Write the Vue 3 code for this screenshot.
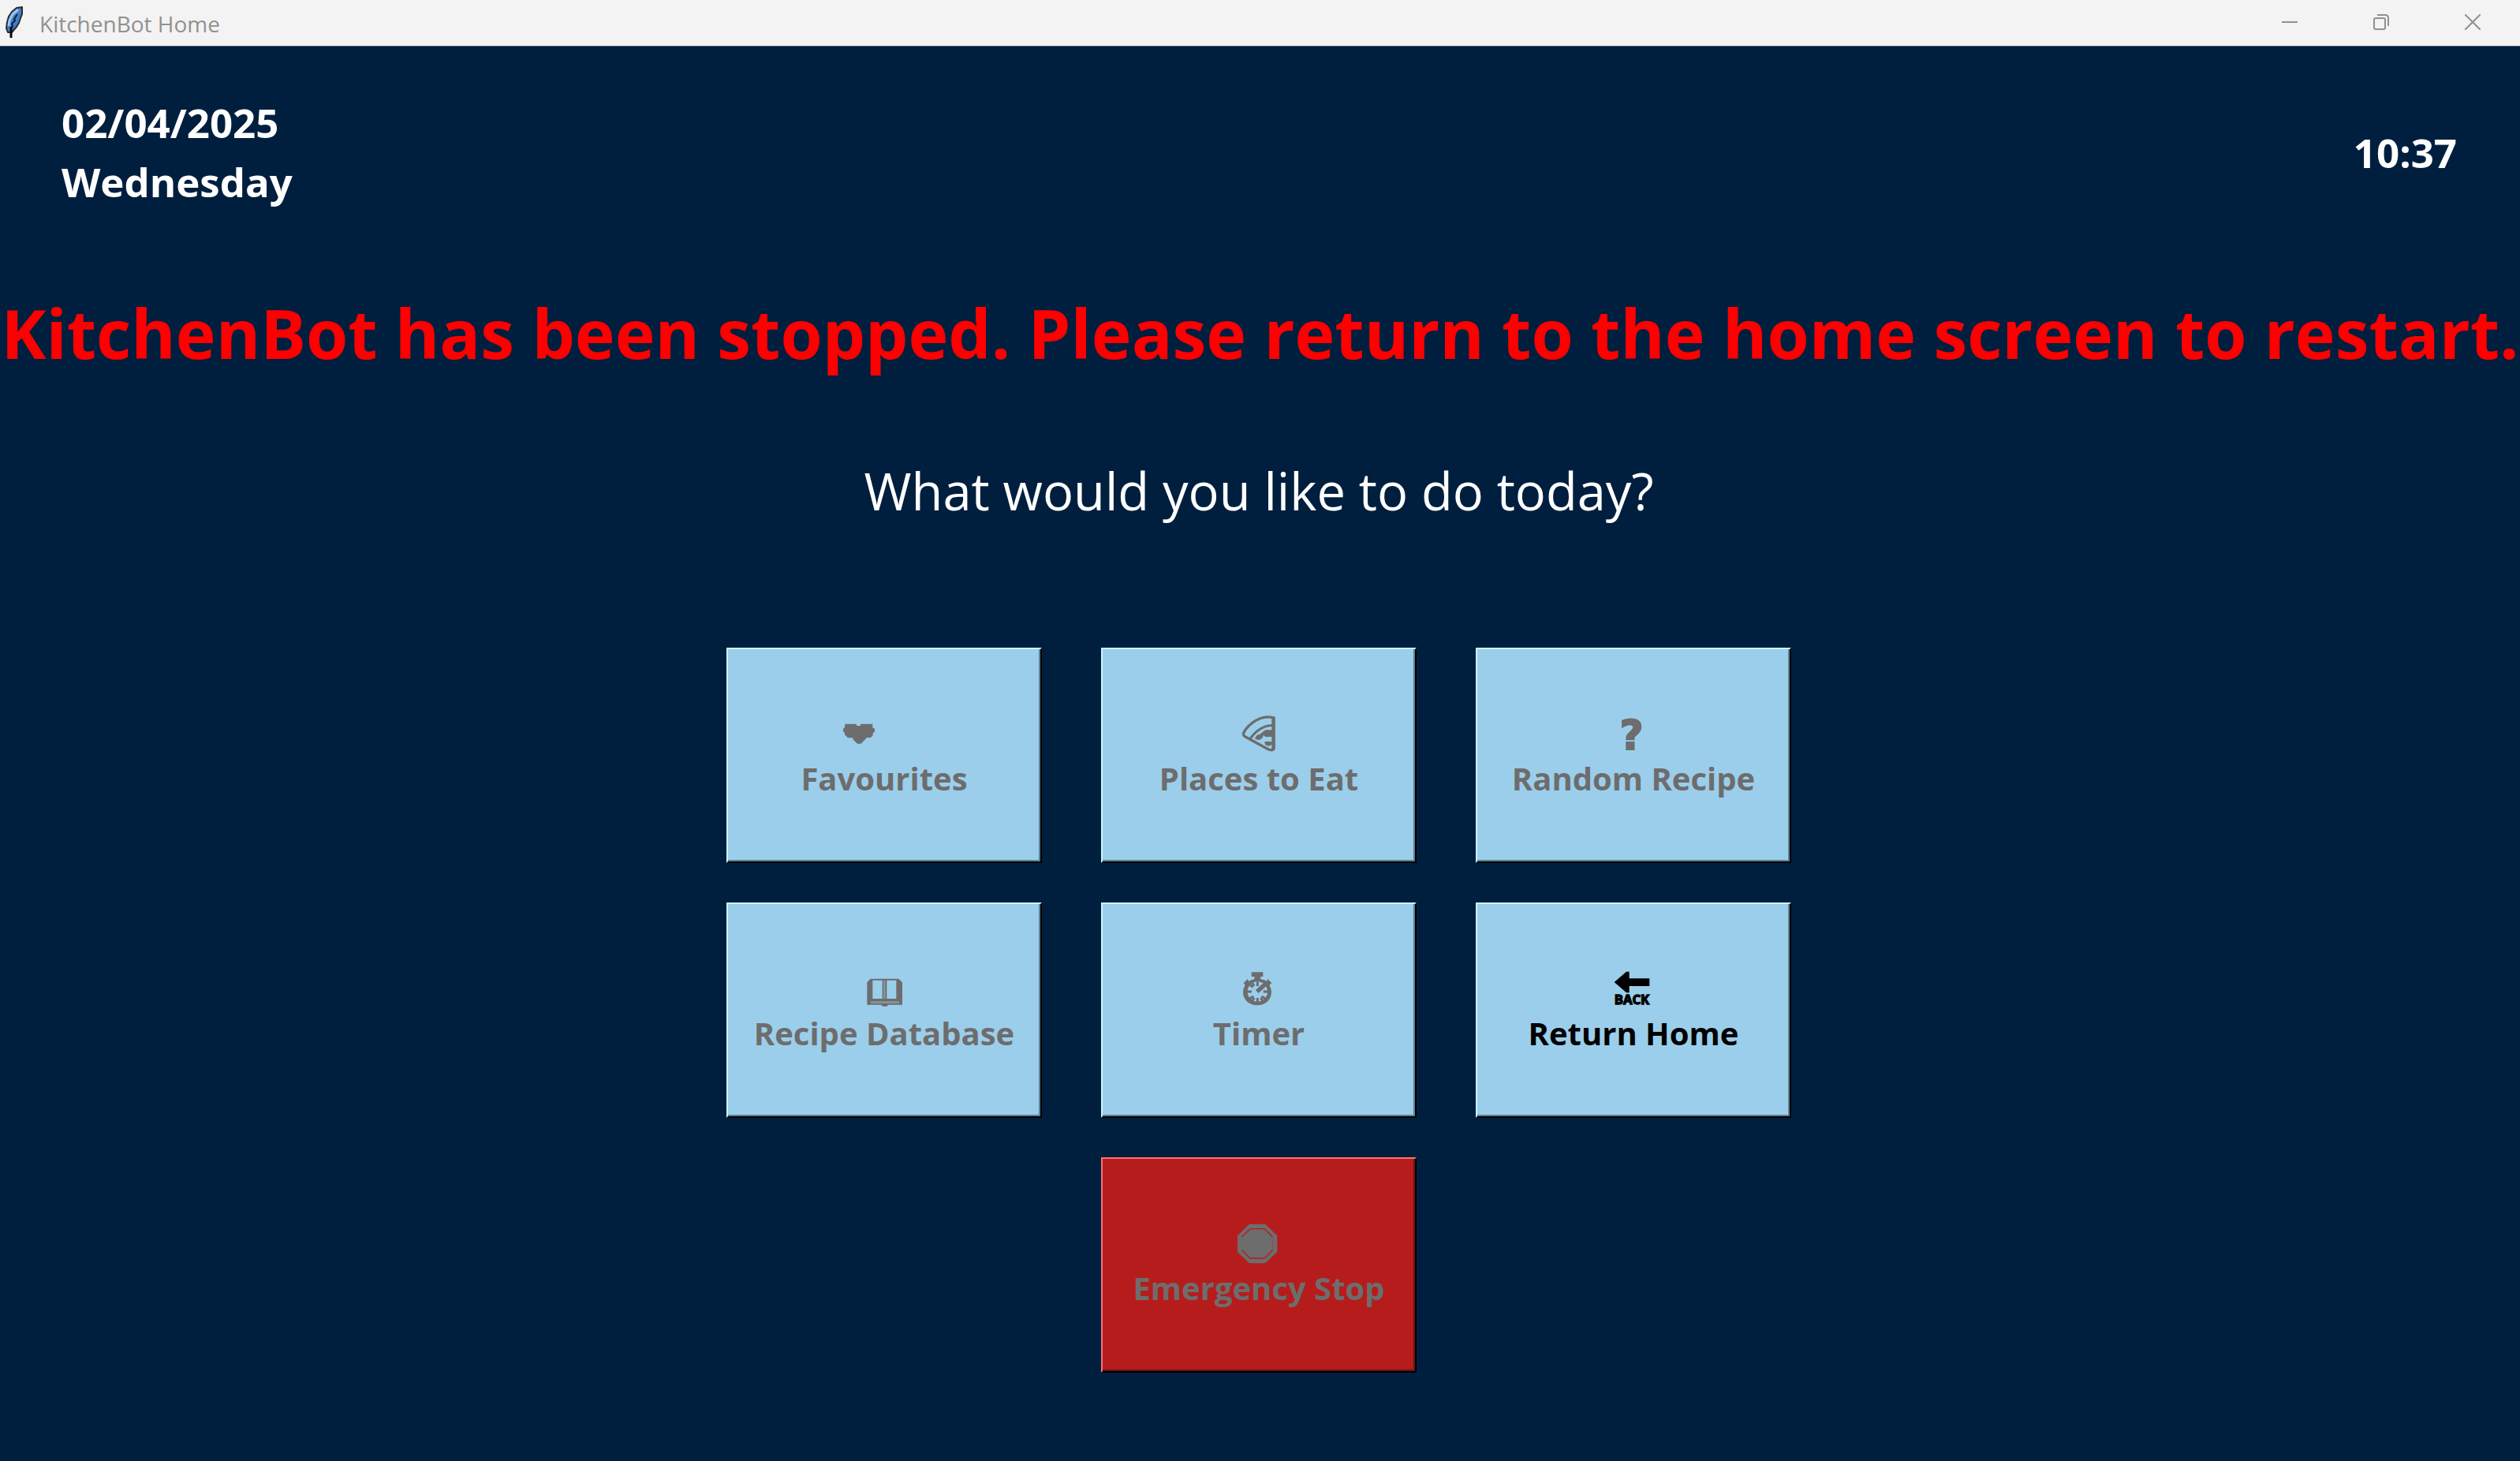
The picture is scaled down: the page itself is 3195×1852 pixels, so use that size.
<script setup>
const actions = [
  { id: 'favourites', label: 'Favourites', disabled: true },
  { id: 'places', label: 'Places to Eat', disabled: true },
  { id: 'random', label: 'Random Recipe', disabled: true },
  { id: 'database', label: 'Recipe Database', disabled: true },
  { id: 'timer', label: 'Timer', disabled: true },
  { id: 'home', label: 'Return Home', disabled: false },
  { id: 'stop', label: 'Emergency Stop', disabled: true }
]
</script>

<template>
  <div class="window">
    <header class="titlebar">
      <svg class="feather" viewBox="0 0 28 44" width="28" height="44" aria-hidden="true">
        <path d="M24 3L17 4 11 9 7 15 5 22 4 30 6 35 11 35 17 28 20 23 22 17 24 12z" fill="#3f7fd0" stroke="#2b2b2b" stroke-width="2" stroke-linejoin="round" />
        <path d="M19 6L12 12 8 20 7 27" fill="none" stroke="#9cc8ee" stroke-width="3" />
        <path d="M18 12L14 18 15 20 11 24 12 27 10 31" fill="none" stroke="#16202c" stroke-width="2" />
        <path d="M10 28V42" fill="none" stroke="#0b0b0b" stroke-width="3" />
      </svg>
      <span class="title">KitchenBot Home</span>
      <div class="controls">
        <button type="button" aria-label="Minimize">
          <svg viewBox="0 0 20 20" width="20" height="20"><path d="M0 10h20" stroke-width="2" /></svg>
        </button>
        <button type="button" aria-label="Restore">
          <svg viewBox="0 0 20 20" width="20" height="20"><rect x="1" y="5" width="14" height="14" rx="2" stroke-width="2" /><path d="M5 1h10q4 0 4 4v10" stroke-width="2" /></svg>
        </button>
        <button type="button" aria-label="Close">
          <svg viewBox="0 0 20 20" width="20" height="20"><path d="M0 0l20 20M20 0L0 20" stroke-width="2" /></svg>
        </button>
      </div>
    </header>

    <main>
      <div class="status">
        <div class="date">02/04/2025<br />Wednesday</div>
        <div class="time">10:37</div>
      </div>
      <h1>KitchenBot has been stopped. Please return to the home screen to restart.</h1>
      <section class="menu">
        <p class="prompt">What would you like to do today?</p>

        <div class="grid">
          <button
            v-for="a in actions"
            :key="a.id"
            type="button"
            class="action"
            :class="a.id"
            :disabled="a.disabled"
          >
            <svg v-if="a.id === 'favourites'" viewBox="477 264 312 174" width="104" height="58" aria-hidden="true">
              <path d="M484 317h44v7h15v-7h46v14l8 4v12l-7 5v8l-8 9h-15l-8 9-14 14h-14l-17-16v-6h-19l-12-12v-7l-6-5v-11l6-4z" />
            </svg>
            <svg v-else-if="a.id === 'places'" viewBox="549 264 168 174" width="56" height="58" aria-hidden="true">
              <path d="M690 294Q650 282 608 313Q582 333 574 354Q574 362 582 366L664 411Q684 422 690 410Z" fill="none" stroke="currentColor" stroke-width="10" stroke-linejoin="round" />
              <path d="M601 372Q640 320 690 323" fill="none" stroke="currentColor" stroke-width="9" />
              <path d="M682 290h13v122l-6 8h-7z" />
              <path d="M650 346q10-10 22-6h14v26h-18q-12 2-18-6-2 16-18 18l-14-4q4-18 20-18zM654 386l10-3 18 2v12l-12 4-12-4z" />
            </svg>
            <svg v-else-if="a.id === 'random'" viewBox="549 264 168 174" width="56" height="58" aria-hidden="true">
              <text class="mark" x="626" y="415" text-anchor="middle">?</text>
            </svg>
            <svg v-else-if="a.id === 'database'" viewBox="549 272 168 174" width="56" height="58" aria-hidden="true">
              <path d="M581 325h107l14 14v85h-54l-5 6h-16l-5-6h-54v-85zM589 331v70h37v-70zM643 331v70h36v-70z" fill-rule="evenodd" />
              <path d="M582 415h108M634 331v70" fill="none" stroke="#8595a0" stroke-width="8" />
            </svg>
            <svg v-else-if="a.id === 'timer'" viewBox="549 272 168 174" width="56" height="58" aria-hidden="true">
              <path d="M605 300h44v17h-9v10q16 2 22 8l5-8 15 14-9 9q8 12 8 25c0 31-24 51-54 51s-54-20-54-51q0-14 8-25l-6-9 15-14 6 8q7-6 20-8v-10h-11z" />
              <circle cx="628" cy="374" r="38" fill="#9bceeb" />
              <path d="M628 336v17M628 398v16M588 374h18M650 374h18M599 348l12 9M599 400l14-8M657 400l-14-8M608 410l8-12M648 410l-8-12M608 340l7 12" fill="none" stroke="currentColor" stroke-width="9" />
              <path d="M626 374l38-34" fill="none" stroke="currentColor" stroke-width="16" />
            </svg>
            <svg v-else-if="a.id === 'home'" viewBox="549 272 168 174" width="56" height="58" aria-hidden="true">
              <path d="M560 338l46-40h11v26h77v29h-77v25h-11z" />
              <text class="back" x="627" y="423" text-anchor="middle">BACK</text>
            </svg>
            <svg v-else viewBox="549 264 168 174" width="56" height="58" aria-hidden="true">
              <path d="M597 281h60l46 44v62l-46 43h-60l-45-43v-62z" />
              <path d="M569 330l31-31h55l30 31M569 380l31 31h55l30-31" fill="none" stroke="#b71c1c" stroke-width="4" />
              <path d="M685 330v50" fill="none" stroke="#925050" stroke-width="4" />
            </svg>
            <span>{{ a.label }}</span>
          </button>
        </div>
      </section>
    </main>
  </div>
</template>

<style>
body {
  margin: 0;
  background: #001f3f;
}
</style>

<style scoped>
.window {
  min-height: 100vh;
  background: #001f3f;
  color: #fff;
  font-family: "Open Sans", "Noto Sans", sans-serif;
  overflow: hidden;
}
.titlebar {
  box-sizing: border-box;
  height: 59px;
  display: flex;
  align-items: center;
  padding: 0 2px 2px 4px;
  background: #f3f3f3;
  border-bottom: 1px solid #4a5f78;
  color: #919191;
}
.feather {
  flex: none;
}
.title {
  margin-left: 18px;
  font-size: 28px;
  line-height: 40px;
  padding-top: 4px;
}
.controls {
  display: flex;
  margin-left: auto;
}
.controls button {
  width: 116px;
  height: 56px;
  display: flex;
  align-items: center;
  justify-content: center;
  padding: 0;
  border: 0;
  background: none;
}
.controls svg {
  fill: none;
  stroke: #919191;
}
.status {
  display: flex;
  align-items: center;
  justify-content: space-between;
  padding: 59px 80px 0 78px;
  font-size: 51px;
  font-weight: 700;
  line-height: 75px;
}
h1 {
  display: flex;
  justify-content: center;
  margin: 92px 0 0;
  font-size: 86px;
  font-weight: 700;
  line-height: 124px;
  white-space: nowrap;
  color: #f00;
}
.menu {
  padding: 90px 3px 0 0;
}
.prompt {
  margin: 0;
  font-size: 65px;
  line-height: 96px;
  text-align: center;
}
.grid {
  display: flex;
  flex-wrap: wrap;
  justify-content: center;
  gap: 50px 75px;
  width: 1350px;
  margin: 151px auto 0;
}
.action {
  box-sizing: border-box;
  width: 400px;
  height: 273px;
  display: flex;
  flex-direction: column;
  align-items: center;
  justify-content: center;
  padding: 0;
  border: 2px solid;
  border-color: #c8f4fc #000 #000 #c8f4fc;
  box-shadow: inset -2px -2px #5d8294;
  background: #9bceeb;
  color: #000;
  font-family: inherit;
  font-size: 40px;
  font-weight: 700;
  line-height: 58px;
  white-space: nowrap;
}
.action:disabled {
  color: #6d6d6d;
}
.action.stop {
  border-color: #f87474 #000 #000 #f87474;
  box-shadow: inset -2px -2px #6d1111;
  background: #b71c1c;
}
.action svg {
  flex: none;
  fill: currentColor;
  overflow: visible;
}
.mark {
  font-family: "DejaVu Sans", sans-serif;
  font-size: 156px;
  font-weight: 700;
  stroke: currentColor;
  stroke-width: 6px;
}
.back {
  font-size: 50px;
  font-weight: 700;
  stroke: currentColor;
  stroke-width: 4px;
}
</style>
